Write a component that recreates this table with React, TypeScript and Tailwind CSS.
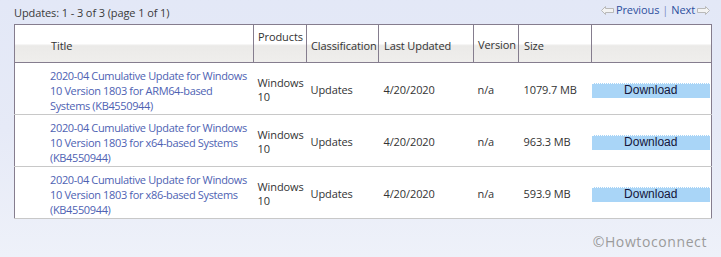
import React from 'react';

type Update = { title: string; size: string };

const updates: Update[] = [
  { title: '2020-04 Cumulative Update for Windows 10 Version 1803 for ARM64-based Systems (KB4550944)', size: '1079.7 MB' },
  { title: '2020-04 Cumulative Update for Windows 10 Version 1803 for x64-based Systems (KB4550944)', size: '963.3 MB' },
  { title: '2020-04 Cumulative Update for Windows 10 Version 1803 for x86-based Systems (KB4550944)', size: '593.9 MB' },
];

function LeftArrow() {
  return (
    <svg width="13" height="9" viewBox="0 0 13 9" className="mr-[2px]">
      <path d="M0.5 4.5 L4.5 0.5 V2.5 H12.5 V6.5 H4.5 V8.5 Z" fill="#f3f3f3" stroke="#b9b9b9" strokeWidth="1" />
    </svg>
  );
}

function RightArrow() {
  return (
    <svg width="13" height="9" viewBox="0 0 13 9" className="ml-[2px]">
      <path d="M12.5 4.5 L8.5 0.5 V2.5 H0.5 V6.5 H8.5 V8.5 Z" fill="#f3f3f3" stroke="#b9b9b9" strokeWidth="1" />
    </svg>
  );
}

export default function App() {
  return (
    <div
      className="w-[721px] h-[257px] overflow-hidden bg-gradient-to-b from-[#e3e8f7] via-[#e6eaf7] to-[#eef1f9] text-[#333] text-[11px] tracking-[-0.1px] pl-[14px] pr-[11px] pt-[3px]"
      style={{ fontFamily: '"Open Sans", "Noto Sans", sans-serif' }}
    >
      <div className="flex justify-between items-center h-[21px]">
        <span className="text-[#3a3a3a]">Updates: 1 - 3 of 3 (page 1 of 1)</span>
        <div className="flex items-center text-[#2d4f9e] mt-[-6px]">
          <LeftArrow />
          <span>Previous</span>
          <span className="mx-[3px] text-[#7a8fc4]">|</span>
          <span>Next</span>
          <RightArrow />
        </div>
      </div>

      <table className="table-fixed border-collapse w-[697px] bg-white border border-[#857d8e]">
        <colgroup>
          <col className="w-[239px]" />
          <col className="w-[53px]" />
          <col className="w-[72px]" />
          <col className="w-[95px]" />
          <col className="w-[45px]" />
          <col className="w-[73px]" />
          <col className="w-[120px]" />
        </colgroup>
        <thead>
          <tr className="h-[38px] bg-[linear-gradient(to_bottom,#ffffff_0%,#ffffff_50%,#ebeae8_56%,#efeeec_100%)] border-b border-[#857d8e] text-left">
            <th className="font-normal pl-[36px] pt-[6px] border-r border-[#857d8e]">Title</th>
            <th className="font-normal pl-[4px] align-top pt-[4px] border-r border-[#857d8e]">Products</th>
            <th className="font-normal pl-[4px] pt-[5px] border-r border-[#857d8e]">Classification</th>
            <th className="font-normal pl-[5px] pt-[6px] border-r border-[#857d8e]">Last Updated</th>
            <th className="font-normal pl-[4px] pt-[3px] border-r border-[#857d8e]">Version</th>
            <th className="font-normal pl-[5px] pt-[6px] border-r border-[#857d8e]">Size</th>
            <th className="font-normal"></th>
          </tr>
        </thead>
        <tbody>
          {updates.map((u, i) => (
            <tr key={i} className="h-[52px] border-b border-[#c8c8c8] [&>td]:pt-[3px]">
              <td className="pl-[35px] pr-0 leading-[15px] tracking-[-0.35px] text-[#4e62b3]">{u.title}</td>
              <td className="pl-[4px] leading-[14px]">Windows<br />10</td>
              <td className="pl-[4px]">Updates</td>
              <td className="pl-[5px]">4/20/2020</td>
              <td className="pl-[4px]">n/a</td>
              <td className="pl-[5px]">{u.size}</td>
              <td className="pr-[1px]">
                <div className="h-[15px] bg-[#a9d5f7] border-t border-dotted border-white text-center text-[#16163a] text-[12px] leading-[13px] tracking-normal"
                  style={{ fontFamily: '"Liberation Sans", Arial, sans-serif' }}>
                  Download
                </div>
              </td>
            </tr>
          ))}
        </tbody>
      </table>

      <div className="flex justify-end pr-[3px] mt-[12px] text-[14px] text-[#9b9b9b] tracking-[0.6px]">©Howtoconnect</div>
    </div>
  );
}
